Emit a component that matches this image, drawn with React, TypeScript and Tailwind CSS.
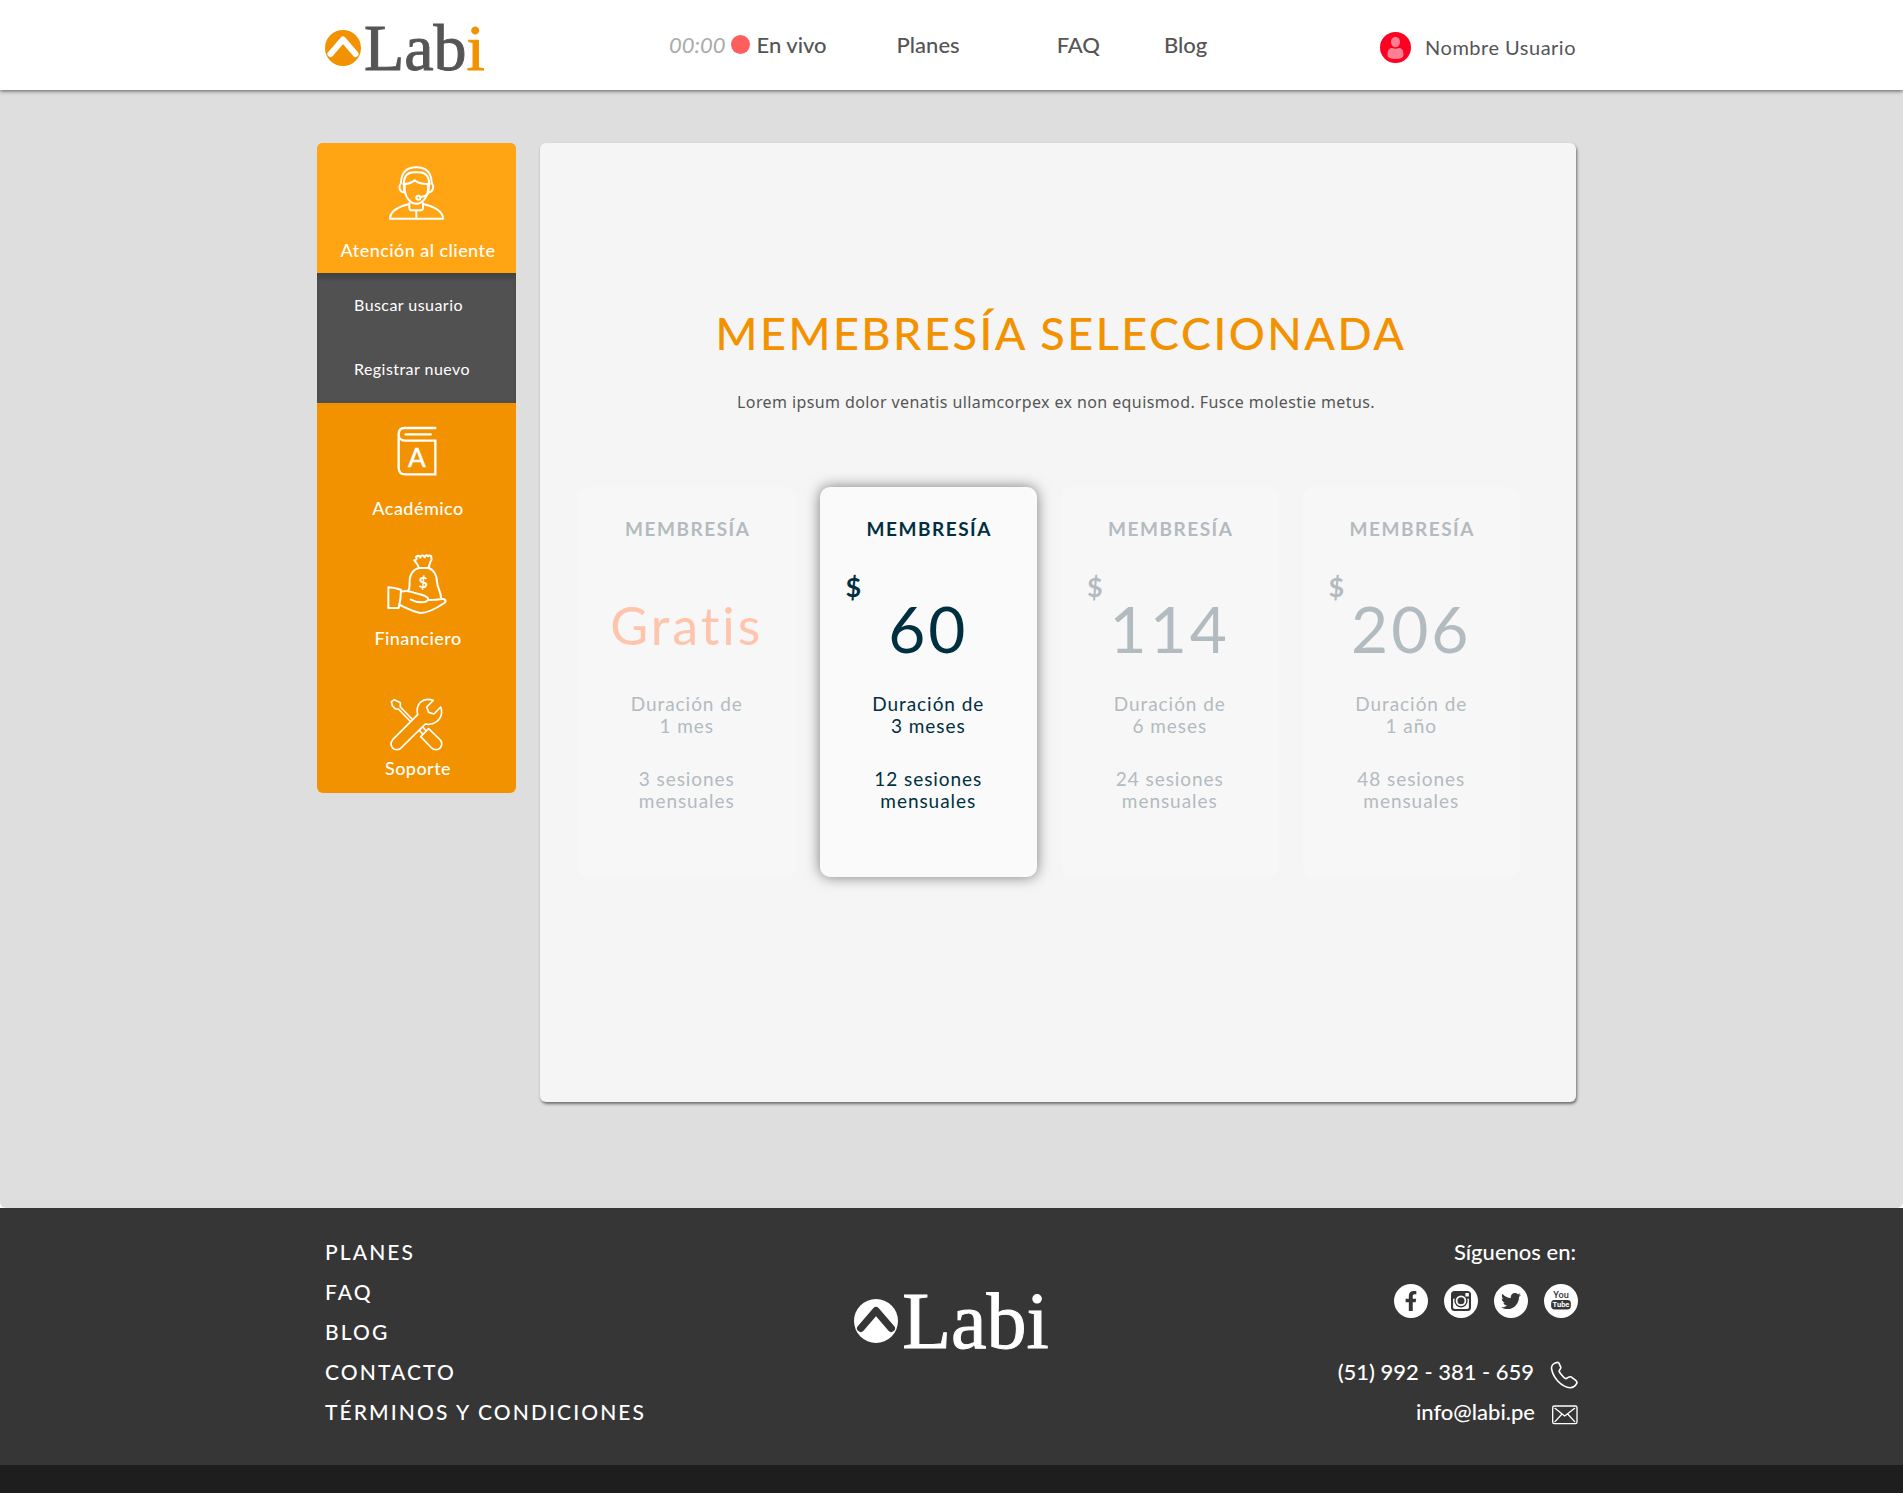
import React from "react";
import { FaFacebookF, FaTwitter } from "react-icons/fa";

const stroke = {
  fill: "none",
  stroke: "currentColor",
  strokeLinecap: "round" as const,
  strokeLinejoin: "round" as const,
};

function LogoMark({ className, chevron }: { className: string; chevron: string }) {
  return (
    <svg viewBox="0 0 36 36" className={className} aria-hidden="true">
      <circle cx="18" cy="18" r="18" fill="currentColor" />
      <path d="M5.5 24 18 9.500 30.5 24" fill="none" stroke={chevron} strokeWidth="6" strokeLinecap="round" strokeLinejoin="round" />
    </svg>
  );
}

function AgentIcon() {
  return (
    <svg viewBox="266 109 165 162" className="h-[54px] w-[55px]" {...stroke} strokeWidth="6" aria-hidden="true">
      <path d="M327 223C290 232 269 245 269 267H428C428 245 405 232 368 223" />
      <path d="M327 220V236Q328 242 335 242H360Q368 242 368 236V220M348 243V267" />
      <path d="M313 163V180C315 205 332 222 348 222S381 205 383 180V163" />
      <path d="M310 163C311 140 320 128 340 128H356C376 128 386 140 387 163C370 164 352 160 343 152C335 158 322 163 310 163Z" />
      <path d="M302 160C303 130 318 113 348 113S393 130 394 160" />
      <path d="M302 160C294 170 296 186 312 188L310 163M394 160C402 170 400 186 384 188L387 163" />
      <circle cx="354" cy="204" r="6" />
      <path d="M360 202C372 200 382 196 386 188" />
    </svg>
  );
}

function BookIcon() {
  return (
    <svg viewBox="289 889 120 150" className="h-[50px] w-10" {...stroke} strokeWidth="7" strokeLinejoin="miter" aria-hidden="true">
      <path d="M404 895H311C300 895 294 902 294 914S302 933 312 933H404V1034H315C302 1034 294 1028 294 1014V914" />
      <path d="M315 914H390" />
      <text x="349" y="1011" textAnchor="middle" fontFamily="Lato, sans-serif" fontSize="78" fontWeight="500" fill="currentColor" strokeWidth="1">A</text>
    </svg>
  );
}

function MoneyIcon() {
  return (
    <svg viewBox="259 475 180 180" className="size-[60px]" {...stroke} strokeWidth="6" aria-hidden="true">
      <path d="M263 575C275 576 290 579 301 582C301 600 298 620 294 637H263Z" />
      <path d="M302 588C315 584 327 586 340 591C352 595 376 597 382 608C384 616 374 620 362 620C350 620 340 617 330 612" />
      <path d="M382 612C400 615 415 611 425 610C434 609 438 617 431 622C410 636 385 652 360 652C340 650 318 638 297 628" />
      <path d="M322 585C329 578 326 568 327 560C326 535 340 520 355 517H383C400 522 409 540 409 558C410 578 420 585 421 606" />
      <path d="M354 515C352 505 345 500 341 494C347 493 350 490 346 484C351 478 356 480 359 486C360 478 369 477 372 485C375 478 380 477 382 482C388 477 393 480 392 487C395 492 390 495 388 502L384 515" />
      <text x="368" y="578" textAnchor="middle" fontFamily="Lato, sans-serif" fontSize="48" fontWeight="700" fill="currentColor" stroke="none">$</text>
    </svg>
  );
}

function ToolsIcon() {
  return (
    <svg viewBox="272 907 159 159" className="size-[53px]" {...stroke} strokeWidth="5" aria-hidden="true">
      <path d="M355 957 280 1032C270 1045 277 1062 293 1062C299 1062 303 1060 306 1056L378 985C402 990 425 975 427 950C427 943 426 938 424 934L404 955 388 950 382 934 402 914C370 903 348 925 355 957Z" />
      <path d="M338 970 303 934V921L285 912 276 918 279 930 288 940H297L332 976" />
      <path d="M364 1023 388 999 423 1033C432 1045 425 1062 409 1062C403 1062 400 1060 397 1057ZM360 1004 370 1015M370 994 380 1005M360 1004 364 999" />
    </svg>
  );
}

function PhoneIcon() {
  return (
    <svg viewBox="750 453 86 86" className="size-7" {...stroke} strokeWidth="5" aria-hidden="true">
      <path d="M770 458C760 460 753 468 755 478C760 505 785 533 812 535C820 535 828 530 832 522C834 518 832 515 828 512L815 502C810 500 808 502 803 505C800 508 796 507 792 503C786 497 780 490 778 485C778 480 784 478 783 472L777 459C775 457 772 457 770 458Z" />
    </svg>
  );
}

function MailIcon() {
  return (
    <svg viewBox="755 584 78 60" className="h-5 w-[26px]" {...stroke} strokeWidth="4" aria-hidden="true">
      <rect x="757" y="587" width="73" height="53" rx="5" />
      <path d="M764 594 793 617 823 594M764 634 785 611M823 634 802 611" />
    </svg>
  );
}

function InstagramIcon() {
  return (
    <svg viewBox="0 0 57 57" className="size-5" aria-hidden="true">
      <rect width="57" height="57" rx="10" fill="currentColor" />
      <path d="M6 22H51V46Q51 51 46 51H11Q6 51 6 46Z" fill="#fff" />
      <circle cx="28.500" cy="28" r="19" fill="currentColor" />
      <circle cx="28.500" cy="28" r="15" fill="#fff" />
      <circle cx="28.500" cy="28" r="10" fill="currentColor" />
      <rect x="41" y="6" width="10" height="10" rx="1" fill="#fff" />
    </svg>
  );
}

function YouTubeIcon() {
  return (
    <svg viewBox="0 0 100 100" className="size-[34px]" aria-hidden="true">
      <rect x="21" y="47" width="58" height="28" rx="10" fill="currentColor" />
      <text x="50" y="41" textAnchor="middle" fontFamily="Roboto, sans-serif" fontSize="27" fontWeight="500" fill="currentColor">You</text>
      <text x="50" y="69" textAnchor="middle" fontFamily="Roboto, sans-serif" fontSize="22" fontWeight="700" fill="#fff">Tube</text>
    </svg>
  );
}

const sections = [
  { label: "Académico", icon: <BookIcon />, gap: "gap-5" },
  { label: "Financiero", icon: <MoneyIcon />, gap: "gap-3" },
  { label: "Soporte", icon: <ToolsIcon />, gap: "gap-[5px]" },
];

const plans = [
  { price: "Gratis", duration: "1 mes", sessions: "3 sesiones", free: true, selected: false },
  { price: "60", duration: "3 meses", sessions: "12 sesiones", free: false, selected: true },
  { price: "114", duration: "6 meses", sessions: "24 sesiones", free: false, selected: false },
  { price: "206", duration: "1 año", sessions: "48 sesiones", free: false, selected: false },
];

const footerLinks = ["PLANES", "FAQ", "BLOG", "CONTACTO", "TÉRMINOS Y CONDICIONES"];

const socials = [
  { name: "Facebook", icon: <FaFacebookF className="size-5" /> },
  { name: "Instagram", icon: <InstagramIcon /> },
  { name: "Twitter", icon: <FaTwitter className="size-5" /> },
  { name: "YouTube", icon: <YouTubeIcon /> },
];

function Header() {
  return (
    <header className="relative z-10 bg-white shadow-[0_1px_4px_rgba(0,0,0,0.6)]">
      <div className="mx-auto flex h-[90px] max-w-[1253px] items-center text-[22px] text-[#555]">
        <a href="#" aria-label="Labi" className="mt-1.5 flex items-center gap-[3px]">
          <LogoMark className="size-9 text-[#f39200]" chevron="#fff" />
          <span className="font-['Liberation_Serif',serif] text-[66px] leading-16 [-webkit-text-stroke:1px]">
            Lab<span className="text-[#f39200]">i</span>
          </span>
        </a>
        <nav className="-mt-0.5 ml-[184px] flex items-center font-medium">
          <span className="font-normal text-[#aaa] italic">00:00</span>
          <span className="ml-1.5 size-[19px] rounded-full bg-[#ff5e5e]" />
          <a href="#" className="ml-1.5">En vivo</a>
          <a href="#" className="ml-[70px]">Planes</a>
          <a href="#" className="ml-[97px]">FAQ</a>
          <a href="#" className="ml-16">Blog</a>
        </nav>
        <a href="#" className="mt-1 ml-auto flex items-center gap-3.5 pr-0.5 text-[20px] tracking-wide">
          <svg viewBox="0 0 31 31" className="size-[31px]" aria-hidden="true">
            <circle cx="15.500" cy="15.500" r="15.500" fill="#ff0022" />
            <ellipse cx="15.500" cy="10" rx="4.500" ry="5.200" fill="#ff8093" />
            <path d="M7.500 23C7.500 18 9 16 12 16Q15.500 17.500 19 16C22 16 23.500 18 23.500 23Q23.500 27 15.500 27T7.500 23Z" fill="#ff8093" />
          </svg>
          Nombre Usuario
        </a>
      </div>
    </header>
  );
}

function Sidebar() {
  return (
    <aside className="w-[199px] shrink-0 self-start overflow-hidden rounded-md bg-[#f39200] text-center text-[18px] leading-6 font-medium tracking-wide text-white">
      <a href="#" className="flex h-[130px] flex-col items-center justify-end gap-[18px] bg-[#ffa514] pb-[11px]">
        <AgentIcon />
        <span className="pl-[3px]">Atención al cliente</span>
      </a>
      <div className="flex h-[130px] flex-col gap-10 bg-[#515151] pt-5 pl-[37px] text-left text-[16px] font-normal shadow-[inset_0_6px_4px_-1px_#434343]">
        <a href="#">Buscar usuario</a>
        <a href="#">Registrar nuevo</a>
      </div>
      {sections.map((s) => (
        <a key={s.label} href="#" className={`flex h-[130px] flex-col items-center justify-end pb-[13px] ${s.gap}`}>
          {s.icon}
          <span className="pl-[3px]">{s.label}</span>
        </a>
      ))}
    </aside>
  );
}

function PlanCard({ plan }: { plan: (typeof plans)[number] }) {
  return (
    <article
      className={`h-[390px] rounded-[10px] pt-[30px] text-center text-[19px] leading-[22px] tracking-wider ${
        plan.selected
          ? "bg-[#fafafa] text-[#002f3f] shadow-[0_0_14px_rgba(0,0,0,0.5)]"
          : "bg-[#f7f7f7] text-[#b2bbc0]"
      }`}
    >
      <h2 className="pl-0.5 leading-6 font-bold tracking-[0.08em]">MEMBRESÍA</h2>
      <div className="mt-8 h-[88px]">
        {plan.free ? (
          <p className="pt-5 text-[52px] leading-16 tracking-[3px] text-[#ffc4ac]">{plan.price}</p>
        ) : (
          <>
            <p className="pl-[26px] text-left text-[27px] leading-7 font-bold">$</p>
            <p className="-mt-1 text-[64px] leading-16 tracking-[3px]">{plan.price}</p>
          </>
        )}
      </div>
      <p className="mt-8">Duración de<br />{plan.duration}</p>
      <p className="mt-[31px]">{plan.sessions}<br />mensuales</p>
    </article>
  );
}

function Footer() {
  return (
    <footer className="bg-[#363636] text-[22px] leading-10 font-medium text-white">
      <div className="mx-auto grid max-w-[1253px] grid-cols-[1fr_auto_1fr] pt-6 pb-[33px]">
        <ul className="text-[21px] tracking-widest">
          {footerLinks.map((l) => (
            <li key={l}><a href="#">{l}</a></li>
          ))}
        </ul>
        <a href="#" aria-label="Labi" className="mt-[49px] flex items-center gap-1 self-start">
          <LogoMark className="size-11" chevron="#363636" />
          <span className="font-['Liberation_Serif',serif] text-[80px] leading-20 font-normal [-webkit-text-stroke:1px]">Labi</span>
        </a>
        <div className="flex flex-col items-end">
          <p className="pr-0.5">Síguenos en:</p>
          <div className="mt-3 flex gap-4">
            {socials.map((s) => (
              <a key={s.name} href="#" aria-label={s.name} className="flex size-[34px] items-center justify-center rounded-full bg-white text-[#363636]">
                {s.icon}
              </a>
            ))}
          </div>
          <a href="tel:51992381659" className="mt-[34px] flex gap-4">
            (51) 992 - 381 - 659
            <span className="mt-[9px]"><PhoneIcon /></span>
          </a>
          <a href="mailto:info@labi.pe" className="flex gap-[17px]">
            info@labi.pe
            <span className="mt-[13px]"><MailIcon /></span>
          </a>
        </div>
      </div>
      <div className="h-7 bg-[#1e1e1e]" />
    </footer>
  );
}

export default function App() {
  return (
    <div className="min-h-screen bg-white font-['Lato',sans-serif]">
      <Header />
      <div className="rounded-b-md bg-[#dedede]">
        <div className="mx-auto max-w-[1253px] pt-[53px] pr-0.5 pb-[106px]">
          <div className="-ml-2 flex gap-6">
            <Sidebar />
            <main className="min-h-[959px] grow rounded-md bg-[#f5f5f5] pt-[163px] shadow-[1px_2px_3px_rgba(0,0,0,0.5)]">
              <h1 className="pl-1.5 text-center text-[45px] leading-[54px] font-medium tracking-[2.5px] text-[#f39200]">MEMEBRESÍA SELECCIONADA</h1>
              <p className="mt-[30px] pr-1 text-center font-['Noto_Sans',sans-serif] text-[16px] leading-6 tracking-wide text-[#555]">
                Lorem ipsum dolor venatis ullamcorpex ex non equismod. Fusce molestie metus.
              </p>
              <div className="mt-[73px] grid grid-cols-4 gap-6 pr-14 pl-[38px]">
                {plans.map((p) => (
                  <PlanCard key={p.price} plan={p} />
                ))}
              </div>
            </main>
          </div>
        </div>
      </div>
      <Footer />
    </div>
  );
}
